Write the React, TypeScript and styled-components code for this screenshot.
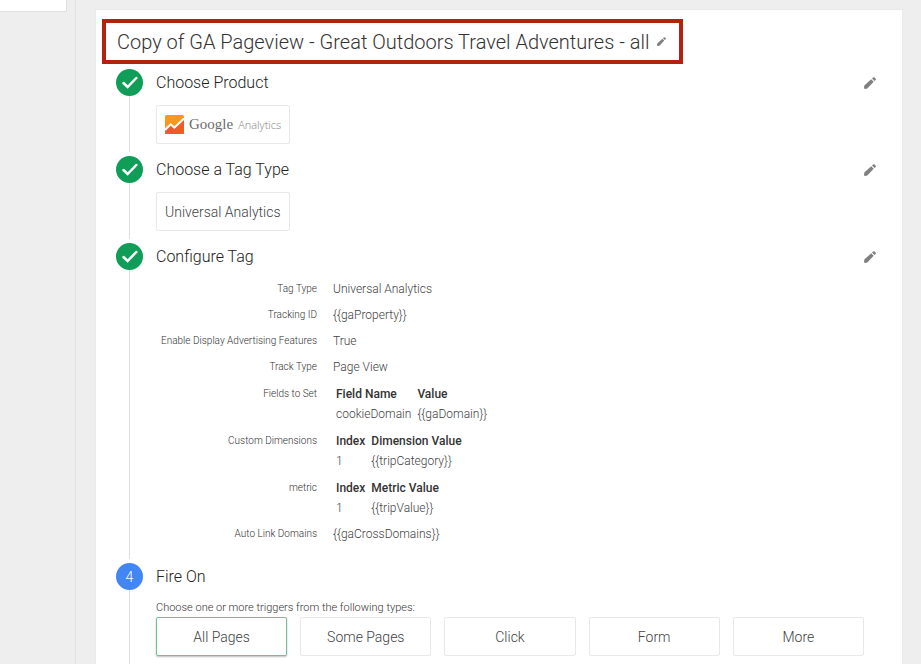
import React from 'react';
import styled, { createGlobalStyle } from 'styled-components';

const GlobalStyle = createGlobalStyle`
  *, *::before, *::after { box-sizing: border-box; }
  body {
    margin: 0;
    background: #eeeeee;
    color: #333333;
    font-family: Roboto, "Liberation Sans", sans-serif;
    font-weight: 300;
  }
  button { font: inherit; color: inherit; cursor: pointer; }
`;

const Page = styled.div`
  display: flex;
  height: 100vh;
  overflow: hidden;
`;

const Sidebar = styled.aside`
  flex: 0 0 76px;
  border-right: 1px solid #e2e2e2;
`;

const SidebarPanel = styled.div`
  width: 67px;
  height: 12px;
  background: #ffffff;
  border: solid #e0e0e0;
  border-width: 0 1px 1px 0;
`;

const Main = styled.main`
  flex: 1;
  min-width: 0;
  padding: 10px 19px 0 20px;
`;

const Card = styled.section`
  min-height: 100%;
  background: #ffffff;
  box-shadow: 0 0 1px #d4d4d4;
  padding-top: 9px;
`;

const TitleBar = styled.header`
  display: flex;
  align-items: center;
  gap: 7px;
  width: fit-content;
  height: 45px;
  margin-left: 6px;
  padding: 0 13px 0 11px;
  border: 4px solid #b3210f;
`;

const Title = styled.h1`
  margin: 0;
  font-size: 20px;
  line-height: 24px;
  font-weight: 300;
  white-space: nowrap;
  color: #333333;
`;

const IconButton = styled.button`
  display: flex;
  padding: 0;
  border: 0;
  background: none;
  color: #808080;
`;

const Steps = styled.ol`
  list-style: none;
  margin: 0;
  padding: 5px 38px 0 20px;
`;

const StepItem = styled.li`
  display: flex;
  gap: 13px;
`;

const Rail = styled.div`
  display: flex;
  flex-direction: column;
  align-items: center;
  flex: 0 0 27px;
`;

const Marker = styled.span<{ $done?: boolean }>`
  display: flex;
  align-items: center;
  justify-content: center;
  width: 27px;
  height: 27px;
  border-radius: 50%;
  background: ${(p) => (p.$done ? '#0f9d58' : '#4285f4')};
  color: #ffffff;
  font-size: 14px;
`;

const Connector = styled.span`
  flex: 1;
  width: 1px;
  margin-bottom: 4px;
  background: #dcdcdc;
`;

const StepContent = styled.div<{ $space: number }>`
  flex: 1;
  min-width: 0;
  padding-bottom: ${(p) => p.$space}px;
`;

const StepHeader = styled.div`
  display: flex;
  align-items: center;
  justify-content: space-between;
  height: 27px;
  margin-right: -12px;
`;

const StepTitle = styled.h2`
  margin: 0;
  font-size: 16px;
  line-height: 24px;
  font-weight: 300;
  color: #212121;
`;

const Choice = styled.button<{ $selected?: boolean }>`
  display: flex;
  align-items: center;
  justify-content: center;
  height: 39px;
  padding: 0 8px;
  font-size: 14px;
  color: #424242;
  background: #ffffff;
  border: 1px solid ${(p) => (p.$selected ? '#6fc19a' : '#e8e8e8')};
  border-radius: 2px;
  box-shadow: ${(p) => (p.$selected ? '0 1px 2px rgba(0, 0, 0, 0.25)' : 'none')};
`;

const PickedChoice = styled(Choice)`
  margin-top: 9px;
`;

const Brand = styled.span`
  display: flex;
  align-items: center;
  gap: 5px;
`;

const BrandName = styled.span`
  font-family: "Liberation Serif", serif;
  font-size: 15px;
  font-weight: 400;
  color: #6b6b6b;
`;

const BrandProduct = styled.span`
  font-family: "Open Sans", sans-serif;
  font-size: 11px;
  color: #808080;
`;

const Settings = styled.dl`
  display: flex;
  flex-direction: column;
  gap: 6px;
  margin: 9px 0 0;
`;

const Setting = styled.div<{ $nested?: boolean }>`
  display: flex;
  align-items: flex-start;
  gap: 16px;
  padding-top: ${(p) => (p.$nested ? 1 : 0)}px;
`;

const SettingName = styled.dt`
  flex: 0 0 161px;
  text-align: right;
  white-space: nowrap;
  font-size: 10px;
  line-height: 20px;
  color: #333333;
`;

const SettingValue = styled.dd`
  margin: 0;
  font-size: 12px;
  line-height: 20px;
  color: #424242;
`;

const FieldTable = styled.table`
  margin-left: 3px;
  border-collapse: collapse;
  th, td { padding: 0 6px 0 0; text-align: left; line-height: 20px; white-space: nowrap; }
  th { font-weight: 500; color: #333333; }
`;

const Hint = styled.p`
  margin: 9px 0 0;
  font-size: 11px;
  line-height: 18px;
  color: #333333;
`;

const Triggers = styled.div`
  display: grid;
  grid-template-columns: repeat(5, 1fr);
  gap: 13px;
`;

const Pencil = ({ size }: { size: number }) => (
  <svg width={size} height={size} viewBox="0 0 12 12" fill="currentColor" aria-hidden="true">
    <path d="M0.300 8.600 7.200 2.300 9.700 4.800 3.300 11.600 1.200 12Q0 12 0 10.800z" />
    <path d="M8 1.500 9.100 0.500Q9.900 -0.200 10.700 0.600L11.500 1.400Q12.300 2.200 11.600 3L10.500 4z" />
  </svg>
);

const Check = () => (
  <svg
    width="16"
    height="13"
    viewBox="0 0 16 13"
    fill="none"
    stroke="currentColor"
    strokeWidth="2.500"
    strokeLinecap="round"
    aria-hidden="true"
  >
    <path d="M1.500 7 5.600 11 14.300 2" />
  </svg>
);

const AnalyticsLogo = () => (
  <svg width="19" height="19" viewBox="0 0 19 19" aria-hidden="true">
    <path d="M1.5 0h16A1.5 1.5 0 0 1 19 1.5V19H0V1.5A1.5 1.5 0 0 1 1.5 0z" fill="#f8981d" />
    <path d="M0 14 5.200 10l4 3L19 4v13.500a1.500 1.500 0 0 1-1.500 1.500h-16A1.500 1.500 0 0 1 0 17.500z" fill="#f1592a" />
    <path d="M0 15 5.700 9.300l3.600 3.400L19 3.500" fill="none" stroke="#ffffff" strokeWidth="2" />
  </svg>
);

type StepProps = {
  title: string;
  number?: number;
  space?: number;
  children: React.ReactNode;
};

const Step = ({ title, number, space = 12, children }: StepProps) => (
  <StepItem>
    <Rail>
      <Marker $done={!number}>{number ?? <Check />}</Marker>
      <Connector />
    </Rail>
    <StepContent $space={space}>
      <StepHeader>
        <StepTitle>{title}</StepTitle>
        {!number && (
          <IconButton type="button" aria-label={`Edit ${title}`}>
            <Pencil size={12} />
          </IconButton>
        )}
      </StepHeader>
      {children}
    </StepContent>
  </StepItem>
);

type SettingData = { name: string; value?: string; table?: { head: string[]; row: string[] } };

const settings: SettingData[] = [
  { name: 'Tag Type', value: 'Universal Analytics' },
  { name: 'Tracking ID', value: '{{gaProperty}}' },
  { name: 'Enable Display Advertising Features', value: 'True' },
  { name: 'Track Type', value: 'Page View' },
  { name: 'Fields to Set', table: { head: ['Field Name', 'Value'], row: ['cookieDomain', '{{gaDomain}}'] } },
  { name: 'Custom Dimensions', table: { head: ['Index', 'Dimension Value'], row: ['1', '{{tripCategory}}'] } },
  { name: 'metric', table: { head: ['Index', 'Metric Value'], row: ['1', '{{tripValue}}'] } },
  { name: 'Auto Link Domains', value: '{{gaCrossDomains}}' },
];

const triggers = ['All Pages', 'Some Pages', 'Click', 'Form', 'More'];

export default function App() {
  const [selected, setSelected] = React.useState('All Pages');
  return (
    <Page>
      <GlobalStyle />
      <Sidebar>
        <SidebarPanel />
      </Sidebar>
      <Main>
        <Card>
          <TitleBar>
            <Title>Copy of GA Pageview - Great Outdoors Travel Adventures - all</Title>
            <IconButton type="button" aria-label="Rename tag">
              <Pencil size={9} />
            </IconButton>
          </TitleBar>
          <Steps>
            <Step title="Choose Product">
              <PickedChoice type="button">
                <Brand>
                  <AnalyticsLogo />
                  <BrandName>Google</BrandName>
                  <BrandProduct>Analytics</BrandProduct>
                </Brand>
              </PickedChoice>
            </Step>
            <Step title="Choose a Tag Type">
              <PickedChoice type="button">Universal Analytics</PickedChoice>
            </Step>
            <Step title="Configure Tag" space={19}>
              <Settings>
                {settings.map(({ name, value, table }) => (
                  <Setting key={name} $nested={!!table}>
                    <SettingName>{name}</SettingName>
                    <SettingValue>
                      {value}
                      {table && (
                        <FieldTable>
                          <thead>
                            <tr>{table.head.map((h) => <th key={h} scope="col">{h}</th>)}</tr>
                          </thead>
                          <tbody>
                            <tr>{table.row.map((c) => <td key={c}>{c}</td>)}</tr>
                          </tbody>
                        </FieldTable>
                      )}
                    </SettingValue>
                  </Setting>
                ))}
              </Settings>
            </Step>
            <Step title="Fire On" number={4} space={24}>
              <Hint>Choose one or more triggers from the following types:</Hint>
              <Triggers>
                {triggers.map((t) => (
                  <Choice
                    key={t}
                    type="button"
                    $selected={t === selected}
                    aria-pressed={t === selected}
                    onClick={() => setSelected(t)}
                  >
                    {t}
                  </Choice>
                ))}
              </Triggers>
            </Step>
          </Steps>
        </Card>
      </Main>
    </Page>
  );
}
